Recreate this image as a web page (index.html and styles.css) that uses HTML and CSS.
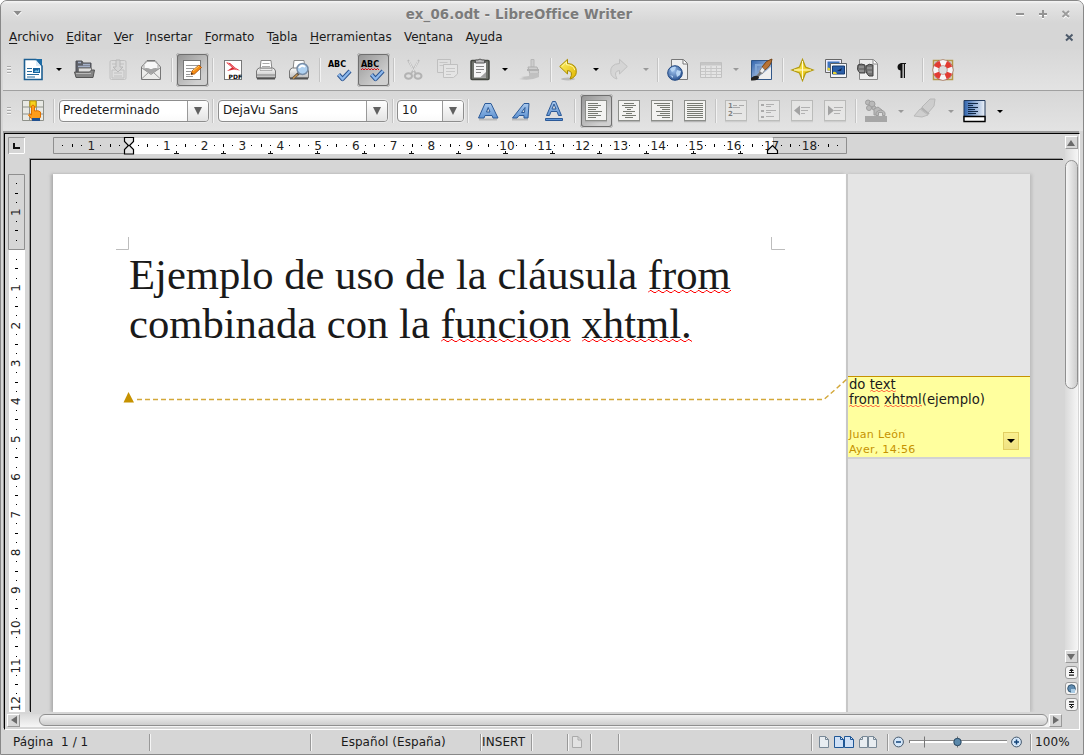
FILE: index.html
```html
<!DOCTYPE html>
<html lang="es">
<head>
<meta charset="utf-8">
<title>ex_06.odt - LibreOffice Writer</title>
<link rel="stylesheet" href="styles.css">
</head>
<body>
<svg class="defs" width="0" height="0">
  <defs>
    <linearGradient id="blue" x1="0" y1="0" x2="1" y2="1"><stop offset="0" stop-color="#2f63ad"/><stop offset="1" stop-color="#dfe9f7"/></linearGradient>
    <linearGradient id="shade" x1="0" y1="0" x2="1" y2="0"><stop offset="0" stop-color="#2f63ad"/><stop offset="1" stop-color="#eef3fa"/></linearGradient>
    <linearGradient id="letter" x1="0" y1="0" x2="0" y2="1"><stop offset="0" stop-color="#a9c8ec"/><stop offset="1" stop-color="#5f93d2"/></linearGradient>
    <linearGradient id="silver" x1="0" y1="0" x2="0" y2="1"><stop offset="0" stop-color="#fafafa"/><stop offset="1" stop-color="#bdbdbd"/></linearGradient>
    <radialGradient id="globe" cx=".4" cy=".35" r=".7"><stop offset="0" stop-color="#9cc0ec"/><stop offset="1" stop-color="#274f8e"/></radialGradient>
    <linearGradient id="gold" x1="0" y1="0" x2="1" y2="1"><stop offset="0" stop-color="#fff56a"/><stop offset="1" stop-color="#e0b400"/></linearGradient>
    <g id="tick"><path d="M10.500 16.500l4 4.500 7.500-8" fill="none" stroke="#2c5590" stroke-width="4.200" stroke-linejoin="round"/><path d="M10.500 16.500l4 4.500 7.500-8" fill="none" stroke="#8db8ec" stroke-width="2.200"/></g>
    <g id="sheet"><rect x="1.500" y="1.500" width="21" height="20" fill="#f3f3f1" stroke="#8c8e8a"/><path d="M1 22.700h22" stroke="#aaa"/></g>
  </defs>
</svg>
<div class="window">
  <header class="titlebar">
    <svg class="win-menu" width="9" height="6" viewBox="0 0 9 6"><path d="M0 1h9L4.500 5.500z" fill="#fff"/><path d="M.500 0h8L4.500 4.500z" fill="#8b8b8b"/></svg>
    <h1 class="title">ex_06.odt - LibreOffice Writer</h1>
    <svg class="win-controls" width="58" height="10" viewBox="0 0 58 10"><g fill="none" stroke-width="2"><path d="M0 6h8M23 6h8M27 2v8M47 3l6 6M53 3l-6 6" stroke="#fff"/><path d="M0 5h8M23 5h8M27 1v8" stroke="#939393"/><path d="M46.500 2l6.500 6M53 2l-6.500 6" stroke="#9c9c9c"/></g></svg>
  </header>
  <nav class="menubar">
    <span><u>A</u>rchivo</span><span><u>E</u>ditar</span><span><u>V</u>er</span><span><u>I</u>nsertar</span><span><u>F</u>ormato</span><span>T<u>a</u>bla</span><span><u>H</u>erramientas</span><span>Ve<u>n</u>tana</span><span>Ay<u>u</u>da</span>
    <svg class="doc-close" width="9" height="9" viewBox="0 0 9 9"><path d="M1 1.500l6.500 6M7.500 1.500L1 7.500" stroke="#4e5b6b" stroke-width="2"/></svg>
  </nav>

  <div class="toolbar standard">
    <i class="grip"></i>
    <span class="tool"><svg viewBox="0 0 24 24"><path d="M3.500 1.500H15l6 6.500v13.500H3.500z" fill="#fff" stroke="#1d5f92" stroke-width="1.600"/><path d="M14 1h7v7z" fill="#1d6ba5"/><path d="M15 2v6h5z" fill="#dcecf8"/><path d="M6 10.500h5M6 13.500h5M6 16.500h12M6 19h8" stroke="#276a9b"/><path d="M12 10h7v5h-7z" fill="#18629b"/><path d="M13 14l2-2 1.500 1 1.500-2v3z" fill="#7ec3e8"/></svg></span>
    <i class="drop w18"></i>
    <span class="tool w34"><svg viewBox="0 0 24 24"><path d="M4 17V3h6l1 2h8v12z" fill="#5e6168" stroke="#4c4f55"/><path d="M6 4.500h3M11 6.500h7M6 8.500h12" stroke="#a4b0c8" stroke-width="1.500"/><path d="M6.500 10h13v5h-13z" fill="#ddd" stroke="#777"/><path d="M2.500 14h15l2-2h3l-1.500 7.500h-17z" fill="#858585" stroke="#555"/><path d="M4 15.500h15" stroke="#b8b8b8"/></svg></span>
    <span class="tool dim"><svg viewBox="0 0 24 24"><rect x="4" y="2.500" width="16" height="19" rx="1.500" fill="#ddd" stroke="#999"/><path d="M6 12h12v8H6zM8 15h8M8 18h8M6 6h12" fill="#ddd" stroke="#999"/><path d="M10 2h4v7h3l-5 5-5-5h3z" fill="#ccc" stroke="#888"/></svg></span>
    <span class="tool"><svg viewBox="0 0 24 24"><path d="M2.500 9L8 2.500h8L21.500 9v12.500h-19z" fill="#ededeb" stroke="#777"/><path d="M5 6.500l3-3h8l3 3v5H5z" fill="#f8f8f8" stroke="#aaa"/><path d="M4 11q4-2 8 .5 4-2.500 8-.5l-8 5z" fill="#a5a5a5"/><path d="M3 20.500l6.500-6M21 20.500l-6.500-6M3 10l9 6.500 9-6.500" fill="none" stroke="#999"/></svg></span>
    <i class="sep"></i>
    <span class="tool on"><svg viewBox="0 0 24 24"><rect x="3.500" y="2.500" width="17" height="19" fill="#fff" stroke="#777"/><path d="M6 7.500h12M6 10.500h8M6 13.500h5M6 16.500h4M6 18.500h7" stroke="#999"/><path d="M11 16.500l1-3.500 7-6 2.500 2.500-7 6.500z" fill="#f58b13" stroke="#a44a08" stroke-width=".8"/><path d="M13 13l6-5" stroke="#ffcf63"/><path d="M11 16.500l.5-2 1.500 1.500z" fill="#222"/></svg></span>
    <i class="sep"></i>
    <span class="tool"><svg viewBox="0 0 24 24"><rect x="3.500" y="2.500" width="17" height="19" fill="#fff" stroke="#777"/><path d="M5 4.500L9 5l5 4.500 5 3-6-1L6 13l5-3.500z" fill="#d92b35"/><path d="M6 4.500L16 12" stroke="#f78287"/><rect x="6" y="14" width="14" height="7" fill="#fff"/><text x="7.500" y="20.500" class="pdf">PDF</text></svg></span>
    <span class="tool"><svg viewBox="0 0 24 24"><path d="M6 12L7 2.500h10L18 12z" fill="#fff" stroke="#888"/><path d="M8.500 5.500h7M8 8.500h8" stroke="#aaa"/><path d="M2.500 13q1-3 3-3h13q2 0 3 3v7h-19z" fill="url(#silver)" stroke="#777"/><path d="M6 10.500h12v2H6z" fill="#eee" stroke="#888" stroke-width=".6"/><path d="M3 16h18v2H3z" fill="#aaa"/><path d="M3 20.500h18" stroke="#505050" stroke-width="2"/></svg></span>
    <span class="tool"><svg viewBox="0 0 24 24"><path d="M6 12L7 2.500h10L18 12z" fill="#fff" stroke="#888"/><path d="M2.500 13q1-3 3-3h13q2 0 3 3v7h-19z" fill="url(#silver)" stroke="#777"/><path d="M3 20.500h18" stroke="#505050" stroke-width="2"/><path d="M12 15l-6 5.500" stroke="#5a5147" stroke-width="3"/><path d="M10.500 16.500L6 20.500" stroke="#c8944f" stroke-width="1.500"/><circle cx="15.500" cy="11" r="5.500" fill="#aed0f0" stroke="#788da6" stroke-width="1.500"/><path d="M12 10q3-4 6-1" stroke="#fff" stroke-width="2" fill="none"/></svg></span>
    <i class="sep"></i>
    <span class="tool"><svg viewBox="0 0 24 24"><text x="0" y="9" class="abc" textLength="18">ABC</text><use href="#tick"/></svg></span>
    <span class="tool on"><svg viewBox="0 0 24 24"><text x="0" y="9" class="abc" textLength="18">ABC</text><path d="M0 12l1.500-1.500L3 12l1.500-1.500L6 12l1.500-1.500L9 12l1.500-1.500L12 12l1.500-1.500L15 12l1.500-1.500L18 12" fill="none" stroke="#e01010"/><use href="#tick"/></svg></span>
    <i class="sep"></i>
    <span class="tool dim"><svg viewBox="0 0 24 24"><path d="M6 2l8 14M17 2L9 16" stroke="#888" stroke-width="1.800"/><path d="M7 3l4.500 10M16 3l-4.500 10" stroke="#eee"/><ellipse cx="6.500" cy="18" rx="3.500" ry="2.800" fill="none" stroke="#777" stroke-width="2"/><ellipse cx="16" cy="18" rx="3.500" ry="2.800" fill="none" stroke="#777" stroke-width="2"/></svg></span>
    <span class="tool dim"><svg viewBox="0 0 24 24"><path d="M2.500 1.500h13v13h-13z" fill="#e5e5e5" stroke="#999"/><path d="M4.500 4.500h8M4.500 7.500h8" stroke="#aaa"/><path d="M8.500 6.500h14V16l-4 3.500h-10z" fill="#eee" stroke="#999"/><path d="M11 10.500h9M11 13.500h9M11 16.500h5" stroke="#aaa"/></svg></span>
    <span class="tool"><svg viewBox="0 0 24 24"><rect x="3" y="2.500" width="18" height="19" rx="1" fill="#70736d" stroke="#42453f" stroke-width="1.500"/><path d="M6 5h12v14.500H6z" fill="#f6f6f6"/><path d="M7.500 2h2.500q2-2 4 0h2.500v3h-9z" fill="#bbb" stroke="#555"/><path d="M8 8.500h8M8 11.500h8M8 14.500h5" stroke="#888"/><path d="M18 14v5.500h-6z" fill="#a0a0a0"/></svg></span>
    <i class="drop w16"></i>
    <span class="tool w34 dim"><svg viewBox="0 0 24 24"><path d="M14 1.500h3V9h-3z" fill="#bbb" stroke="#888"/><path d="M11 9h9q2 4 1.500 9l-8 .5z" fill="#bbb" stroke="#777"/><path d="M10 12h12" stroke="#777" stroke-width="2"/><path d="M12 15h10v4q-8 4-20 2l5-1-3-1 8-1z" fill="#999"/></svg></span>
    <i class="sep"></i>
    <span class="tool"><svg viewBox="0 0 24 24"><ellipse cx="9" cy="21" rx="7" ry="1.500" fill="#bbb"/><path d="M.7 8.500L8.500 1.300v4.200q9.500.5 8.800 9-.5 4.800-6.300 6.500 4-8-2.500-8.500v3.500z" fill="url(#gold)" stroke="#a88b00"/><path d="M2.700 8.500L7.500 4v2.700q7 .3 8.300 5.500" fill="none" stroke="#fff7a5"/></svg></span>
    <i class="drop w15"></i>
    <span class="tool w34 dim"><svg viewBox="0 0 24 24"><path d="M20.300 8.500L12.500 1.300v4.200q-9.500.5-8.800 9 .5 4.800 6.300 6.500-4-8 2.500-8.500v3.500z" fill="#ccc" stroke="#999"/></svg></span>
    <i class="drop w17 faint"></i>
    <i class="sep"></i>
    <span class="tool"><svg viewBox="0 0 24 24"><path d="M5.500 1.500h12l4 4V21.500h-16z" fill="#eee" stroke="#777"/><path d="M17 2v4h4" fill="#fff" stroke="#777"/><circle cx="9" cy="15" r="7.300" fill="url(#globe)" stroke="#234a84"/><path d="M4 11q3-3 6-2l-1 3-3 2zM11 12l4 1-1 4-3 2-1-4zM4 17l3 1v2z" fill="#b6d4f4"/></svg></span>
    <span class="tool dim"><svg viewBox="0 0 24 24"><path d="M1.500 4.500h21v15h-21z" fill="#eee" stroke="#999"/><path d="M2 6h20" stroke="#aaa" stroke-width="3"/><path d="M2 10.500h20M2 13.500h20M2 16.500h20M6.500 8v11M12 8v11M17.500 8v11" stroke="#aaa"/></svg></span>
    <i class="drop w16 faint"></i>
    <span class="tool w35"><svg viewBox="0 0 24 24"><path d="M3.500 2.500h20v19h-20z" fill="url(#blue)" stroke="#315789"/><path d="M8 16V7h10" fill="none" stroke="#7fa5d6" stroke-width="2"/><path d="M8 21h15V9z" fill="#eee"/><path d="M24 1q-6 1-10 8l3 3q6-4 7-11z" fill="#b87336" stroke="#744519"/><path d="M14 9l3 3-3 4-3-2z" fill="#eee" stroke="#888"/><path d="M13 14l-4 5" stroke="#777" stroke-width="2.500"/><path d="M3 20q5-4 8-1 0 4-8 3.500z" fill="#222"/></svg></span>
    <i class="sep"></i>
    <span class="tool"><svg viewBox="0 0 24 24"><path d="M11.500 1.500l3 7.500 7.500 3-7.500 3-3 7.500-3-7.500-7.500-3 7.500-3z" fill="url(#gold)" stroke="#b39b12" stroke-width="1.300"/><path d="M11.500 3v18M3 12h17" stroke="#fffbd0" fill="none"/></svg></span>
    <span class="tool"><svg viewBox="0 0 24 24"><path d="M1.500 1.500h16v13h-16z" fill="#eef" stroke="#666"/><path d="M3.500 3.500h12v9h-12z" fill="#3c73bd"/><path d="M3.500 12.500v-3q3 0 4 3z" fill="#e7d331"/><path d="M6.500 5.500h16v14h-16z" fill="#f5f7fa" stroke="#5c6268"/><path d="M8.500 8h12v8h-12z" fill="#2b5fa9" stroke="#153a70"/><path d="M9 16v-2q3-1 4 2z" fill="#e7d331"/><path d="M13 13l5-3-1 3z" fill="#10284e"/></svg></span>
    <span class="tool"><svg viewBox="0 0 24 24"><path d="M2.500 1.500h14l4 4v16h-18z" fill="#eee" stroke="#888"/><path d="M16 2v4h4" fill="#fff" stroke="#888"/><path d="M1 7q3-2 7 0v8H3q-4-3-2-8zM9 8q3-3 7-1v11h-4q-4-3-3-10z" fill="#747474" stroke="#3f3f3f"/><path d="M2 9h5M10 10h5M2 13h5M11 14h4" stroke="#aaa"/></svg></span>
    <span class="tool"><svg viewBox="0 0 24 24"><path d="M10.500 12.500Q7.500 12 7.500 9t3.500-4h5v1h-1v14h-1.200V6h-1.300v14h-2z" fill="#111"/></svg></span>
    <i class="sep"></i>
    <span class="tool"><svg viewBox="0 0 24 24"><path d="M2.500 2.500h19v19h-19z" fill="none" stroke="#b59847" stroke-width="1.500"/><circle cx="12" cy="12" r="7.200" fill="none" stroke="#9a5a50" stroke-width="6.600"/><circle cx="12" cy="12" r="7.200" fill="none" stroke="#f6f6f6" stroke-width="5.400"/><circle cx="12" cy="12" r="7.200" fill="none" stroke="#e23b32" stroke-width="5.400" stroke-dasharray="5.650 5.660" stroke-dashoffset="-2.800"/></svg></span>
  </div>

  <div class="toolbar formatting">
    <i class="grip"></i>
    <span class="tool"><svg viewBox="0 0 24 24"><path d="M1.500 1.500h21v20h-21z" fill="#e8e9e4" stroke="#8e918a"/><path d="M8.500 1.500v20M15.500 1.500v20M1.500 8h21M1.500 15h21" stroke="#8e918a"/><path d="M9 2h6v6H9z" fill="#f6d21f" stroke="#c7a000"/><path d="M10.500 16V7q1.500-2 3 0v5q4-1 6 1v5l-2 3h-6l-4-5q1-2 3 0z" fill="#ff9d1c" stroke="#e07000"/><path d="M11 19h8v3h-8z" fill="#21508f"/></svg></span>
    <i class="sep"></i>
    <div class="combo c-style"><span>Predeterminado</span><b></b></div>
    <i class="sep w9"></i>
    <div class="combo c-font"><span>DejaVu Sans</span><b></b></div>
    <i class="sep"></i>
    <div class="combo c-size"><span>10</span><b></b></div>
    <i class="sep"></i>
    <span class="tool"><svg viewBox="0 0 24 24"><path d="M3 20.500h18" stroke="#bbb" stroke-width="2"/><path fill-rule="evenodd" d="M2.500 19L9 4.500h6L22 19h-5l-1-2.500H9L8 19zM10.500 13h3.500l-1.800-4.500z" fill="url(#letter)" stroke="#2c5a98" stroke-linejoin="round"/></svg></span>
    <span class="tool"><svg viewBox="0 0 24 24"><path d="M3 20.500h16" stroke="#bbb" stroke-width="2"/><path fill-rule="evenodd" d="M3.500 19L15 4.500h5L19 19h-4v-2.500h-5L8 19zM12.500 13.500h3l.5-5z" fill="url(#letter)" stroke="#2c5a98" stroke-linejoin="round"/></svg></span>
    <span class="tool"><svg viewBox="0 0 24 24"><path fill-rule="evenodd" d="M4.500 16.500l6-14h3l6 14h-3l-1.500-4H9l-1.500 4zM10 10h4l-2-5z" fill="url(#letter)" stroke="#2c5a98" stroke-linejoin="round"/><path d="M3.500 19.500h17v2h-17z" fill="#5c95d8" stroke="#2c5a98"/></svg></span>
    <i class="sep w9"></i>
    <span class="tool on"><svg viewBox="0 0 24 24"><use href="#sheet"/><path d="M4 4.500h10M4 6.500h13M4 8.500h10M4 10.500h8M4 12.500h14M4 14.500h10M4 16.500h13M4 18.500h8" stroke="#777a72"/></svg></span>
    <span class="tool"><svg viewBox="0 0 24 24"><use href="#sheet"/><path d="M7 4.500h10M5 6.500h14M8 8.500h8M10 10.500h4M6 12.500h12M9 14.500h6M5 16.500h14M8 18.500h8" stroke="#777a72"/></svg></span>
    <span class="tool"><svg viewBox="0 0 24 24"><use href="#sheet"/><path d="M4 4.500h16M7 6.500h13M10 8.500h10M12 10.500h8M6 12.500h14M10 14.500h10M7 16.500h13M12 18.500h8" stroke="#777a72"/></svg></span>
    <span class="tool"><svg viewBox="0 0 24 24"><use href="#sheet"/><path d="M4 4.500h16M4 6.500h16M4 8.500h16M4 10.500h16M4 12.500h16M4 14.500h16M4 16.500h16M4 18.500h16" stroke="#777a72"/></svg></span>
    <i class="sep"></i>
    <span class="tool dim"><svg viewBox="0 0 24 24"><use href="#sheet"/><text x="4" y="9" class="num">1</text><text x="4" y="17" class="num">2</text><path d="M9 6.500h4M15 6.500h5M9 8.500h7M9 14.500h9" stroke="#666"/></svg></span>
    <span class="tool dim"><svg viewBox="0 0 24 24"><use href="#sheet"/><path d="M4 5h3v2H4zM4 11h3v2H4zM4 17h3v2H4z" fill="#666"/><path d="M9 5.500h8M9 7.500h5M9 11.500h10M9 13.500h5M9 17.500h8" stroke="#777"/></svg></span>
    <span class="tool dim"><svg viewBox="0 0 24 24"><use href="#sheet"/><path d="M10 6.500v10L4 11.500z" fill="#555"/><path d="M11 8.500h9M11 11.500h7M11 14.500h4" stroke="#777"/></svg></span>
    <span class="tool dim"><svg viewBox="0 0 24 24"><use href="#sheet"/><path d="M5 6.500v10l6-5z" fill="#555"/><path d="M11 8.500h9M11 11.500h7M11 14.500h6" stroke="#777"/></svg></span>
    <i class="sep"></i>
    <span class="tool"><svg viewBox="-1 0 24 24"><path d="M0 17h22v6H0z" fill="#a6a6a6"/><g fill="#b9b9b9" stroke="#9e9e9e"><circle cx="3" cy="3.500" r="2.500"/><circle cx="7" cy="5" r="3"/><circle cx="4" cy="9" r="2.500"/><circle cx="9" cy="9" r="2"/><path d="M9 10l4-2 4 3-5 5H9z"/><path d="M11 16.500v-3q5-5 9 0v3h-2.500v-3h-4v3z"/></g></svg></span>
    <i class="drop w15 faint"></i>
    <span class="tool w35 dim"><svg viewBox="-2 0 24 24"><path d="M0 17l6-7 8 6-6 2zM8 8l8-8h5l-1 7-6 7z" fill="#bbb" stroke="#888"/><path d="M7 9l8 6" stroke="#777" stroke-width="2"/></svg></span>
    <i class="drop w15 faint"></i>
    <span class="tool"><svg viewBox="0 0 24 24"><path d="M2 1.500h21v20H2z" fill="url(#shade)" stroke="#223a5c"/><path d="M6 4.500h10M6 6.500h5M6 8.500h10M6 10.500h7M6 12.500h10M6 14.500h8" stroke="#112846"/><path d="M2 17.500h21v5H2z" fill="#fff" stroke="#000" stroke-width="1.400"/></svg></span>
    <i class="drop w18"></i>
  </div>

  <main class="frame">
    <div class="corner"><svg width="17" height="17" viewBox="0 0 17 17"><path d="M.5.500h16v16H.500z" fill="#d6d6d6" stroke="#999"/><path d="M16.500 1v15.500H1" fill="none" stroke="#fff"/><path d="M6 6v5h6" fill="none" stroke="#111" stroke-width="2"/></svg></div>
    <svg id="hruler" class="hruler" viewBox="30 134 1033 24">
      <path d="M53.500 137.500h74v16h-74zM773 137.500h73.500v16H773z" fill="#d6d6d6" stroke="#8f8f8f"/>
      <path d="M128 138h645v16H128z" fill="#fff"/>
    </svg>
    <svg id="vruler" class="vruler" viewBox="5 158 25 554">
      <path d="M8.500 174.500h16v75h-16z" fill="#d6d6d6" stroke="#8f8f8f"/>
      <path d="M9 250h16v462H9z" fill="#fff"/>
    </svg>
    <section class="view">
      <article class="page">
        <p>Ejemplo de uso de la cláusula <span class="err">from</span><br>combinada con la <span class="err">funcion</span> <span class="err">xhtml.</span></p>
      </article>
      <aside class="margin">
        <div class="note">
          <p class="note-text">do <span class="err small">text</span><br><span class="err small">from</span> <span class="err small">xhtml</span>(ejemplo)</p>
          <footer><span>Juan León<br>Ayer, 14:56</span><i class="note-btn"></i></footer>
        </div>
      </aside>
      <svg class="marks" viewBox="31 160 1032 552">
        <path d="M116 249.500h12.500V237M785 249.500h-13.500V237" fill="none" stroke="#bdbdbd"/>
        <path d="M128.500 392l-5 10.500h10.500z" fill="#c69200"/>
        <path d="M137 399.500h687L847 379" fill="none" stroke="#d3a83a" stroke-width="1.400" stroke-dasharray="5 3"/>
      </svg>
    </section>
    <div class="vscroll">
      <i class="sb up"></i><div class="vtrack"><div class="vthumb"></div></div><i class="sb down"></i>
      <span class="nav"><svg viewBox="0 0 9 9"><path d="M4.500.500L7 3H2zM4 2h1v3H4zM2 4h5v1H2zM2 6.500h5v1.200H2z" fill="#111"/></svg></span>
      <span class="nav"><svg viewBox="0 0 9 9"><circle cx="4.500" cy="4.500" r="3.800" fill="#5f8bb0" stroke="#33546f"/><path d="M4 5h4v4H4z" fill="#a9cbe4"/></svg></span>
      <span class="nav"><svg viewBox="0 0 9 9"><path d="M4.500 8.500L7 6H2zM4 4h1v3H4zM2 1.300h5v1.200H2zM2 4h5v1H2z" fill="#111"/></svg></span>
    </div>
    <div class="hscroll"><i class="sb left"></i><div class="htrack"><div class="hthumb"></div></div><i class="sb right"></i></div>
  </main>

  <footer class="status">
    <span class="cell s1">Página&nbsp; 1 / 1</span><span class="cell s2"></span><span class="cell s3">Español (España)</span><span class="cell s4">INSERT</span><span class="cell s5"></span>
    <span class="cell s6"><svg width="10" height="12" viewBox="0 0 10 12"><path d="M.5.500H6l3.500 3.500v7.500H.500z" fill="#e2e2e2" stroke="#aaa"/><path d="M6 .5V4h3.500" fill="none" stroke="#aaa"/></svg></span>
    <span class="cell s7"></span><span class="cell s8"></span>
    <span class="cell s9"><svg width="58" height="12" viewBox="0 0 58 12"><g stroke-width="1"><path d="M.5.500h6l3 3v8h-9z" fill="#e8edf1" stroke="#788896"/><path d="M6.500.5v3h3" fill="none" stroke="#788896"/><path d="M15.500.500h6l3 3v8h-9zM25.500.500h6l3 3v8h-9z" fill="#cfe0f6" stroke="#1f5796"/><path d="M21.500.5v3h3M31.500.5v3h3" fill="none" stroke="#1f5796"/><path d="M43.500.500h5v11h-8v-8zM49.500.500h5l3 3v8h-8z" fill="#e8edf1" stroke="#788896"/><path d="M43.500.5v3h-3M54.500.5v3h3" fill="none" stroke="#788896"/></g></svg></span>
    <span class="cell s10"><svg width="132" height="14" viewBox="0 0 132 14"><path d="M18 5.500h97" stroke="#888"/><path d="M18 7h97" stroke="#fff" stroke-width="2"/><path d="M17.500 5v3M32.500 1.500v11M65.500 1.500v11" stroke="#777"/><circle cx="65.500" cy="7" r="3.700" fill="#5b89ab" stroke="#27455f"/><circle cx="6.500" cy="7" r="4.900" fill="#d4e7fa" stroke="#45586c"/><path d="M4 7h5" stroke="#124378" stroke-width="1.500"/><circle cx="124.500" cy="7" r="4.900" fill="#d4e7fa" stroke="#45586c"/><path d="M122 7h5M124.500 4.500v5" stroke="#124378" stroke-width="1.500"/></svg></span>
    <span class="cell s11">100%</span>
  </footer>
</div>
<script src="rulers.js"></script>
</body>
</html>
```
FILE: styles.css
```css
* { box-sizing: border-box; }
body { margin: 0; background: #fff; font-family: "DejaVu Sans", sans-serif; font-size: 12px; color: #1a1a1a; overflow: hidden; }
.defs { position: absolute; }
.window { width: 1084px; height: 755px; display: flex; flex-direction: column; background: #d6d6d6; border: 1px solid #888; border-radius: 7px 7px 0 0; overflow: hidden; }

.titlebar { height: 26px; flex: none; display: flex; align-items: center; background: linear-gradient(#f6f6f6, #e4e4e4 3px, #d6d6d6 22px); }
.win-menu { margin-left: 12px; }
.title { margin: 0; flex: 1; text-align: center; font-size: 13.33px; letter-spacing: .13px; font-weight: bold; color: #7b7b7b; text-shadow: 0 1px #ececec; }
.win-controls { margin-right: 9px; }

.menubar { height: 22px; flex: none; display: flex; align-items: center; gap: 12.25px; padding: 0 0 2px 8px; }
.menubar u { text-underline-offset: 2px; }
.doc-close { margin-left: auto; margin-right: 9px; }

.toolbar { flex: none; display: flex; align-items: center; background: linear-gradient(#d7d7d7, #e3e3e3); margin-left: 2px; padding-right: 2px; }
.standard { height: 42px; border-bottom: 1px solid #a0a0a0; }
.formatting { height: 40px; }
.grip { width: 14px; height: 8px; flex: none; background: repeating-linear-gradient(#aaa 0 1px, #f2f2f2 1px 2px, transparent 2px 3px) 4px 0 / 4px 8px no-repeat; }
.tool { width: 33px; height: 34px; flex: none; padding: 5px 4px; border-radius: 4px; }
.tool svg { display: block; width: 24px; height: 24px; overflow: visible; }
.tool.on { box-shadow: inset 0 0 0 1px #d0d0d0, inset 0 0 0 2px #6f6f6f; background: linear-gradient(135deg, #929292, #d0d0d0 75%); }
.dim svg { opacity: .42; }
.w34 { width: 34px; }
.w35 { width: 35px; }
.sep { width: 8px; height: 24px; flex: none; background: linear-gradient(90deg, #c4c4c4 50%, #f2f2f2 50%) 3px 0 / 2px 24px no-repeat; }
.sep.w9 { width: 9px; }
.drop { flex: none; display: flex; justify-content: center; }
.drop::after { content: ""; border: 3px solid transparent; border-top-color: #000; border-bottom: 0; }
.drop.faint::after { border-top-color: #999; }
.w15 { width: 15px; }
.w16 { width: 16px; }
.w17 { width: 17px; }
.w18 { width: 18px; }
.pdf { font: bold 6px "DejaVu Sans", sans-serif; }
.abc { font: bold 8px "DejaVu Sans", sans-serif; }
.num { font: bold 7px "DejaVu Sans", sans-serif; }

.combo { height: 22px; flex: none; display: flex; background: linear-gradient(#fff 60%, #fafafa); border: 1px solid #8d8d8d; border-radius: 4px; box-shadow: 0 0 0 1px #ececec; }
.combo span { flex: 1; padding-left: 4px; line-height: 19px; white-space: nowrap; }
.combo b { width: 21px; border-left: 1px solid #999; border-radius: 0 3px 3px 0; background: linear-gradient(#fff, #e3e3e3); display: flex; align-items: center; justify-content: center; }
.combo b::after { content: ""; border: 4px solid transparent; border-top: 8px solid #606060; border-bottom: 0; }
.c-style { width: 150px; margin-left: 1px; }
.c-style span { padding-left: 3px; letter-spacing: .05px; }
.c-font { width: 170px; margin-right: 1px; }
.c-size { width: 67px; }

.frame { height: 597px; flex: none; margin: 2px 3px 0 3px; border-top: 1px solid #000; border-left: 1px solid #000; border-bottom: 1px solid #fff; border-right: 1px solid #fff; display: grid; grid-template: 24px 554px 16px / 25px 1033px 16px; box-shadow: -1px -2px #999; }
.corner { padding: 3px 0 0 3px; }
.hruler { grid-column: 2; width: 1033px; height: 24px; }
.vruler { grid-row: 2; width: 25px; height: 554px; }
.ruler-label { font: 12px "DejaVu Sans", sans-serif; fill: #222; text-anchor: middle; }
.view { grid-area: 2 / 2; position: relative; display: flex; margin-top: 1px; padding: 14px 0 0 22px; border-left: 1px solid #111; border-top: 1px solid #111; background: #d6d6d6; box-shadow: -1px -1px #999; overflow: hidden; }
.page { width: 793px; background: #fff; padding: 76px 0 0 76px; box-shadow: -2px 0 3px #aaa; }
.page p { margin: 0; font: 42.67px/49px "Liberation Serif", serif; white-space: nowrap; }
.err { background: url("data:image/svg+xml,%3Csvg xmlns='http://www.w3.org/2000/svg' width='8' height='3'%3E%3Cpath d='M0 2.500l2-2h1l3 2h2' fill='none' stroke='red'/%3E%3C/svg%3E") 0 39px / 8px 3px repeat-x; }
.err.small { background-size: 5px 2px; background-position: 0 100%; }
.margin { width: 184px; background: #e5e5e5; border-left: 2px solid #c7c7c7; padding-top: 202px; box-shadow: 2px 0 3px #bcbcbc; }
.note { height: 83px; background: #ffff9e; border-top: 1px solid #c69200; border-bottom: 2px solid #d2d2d2; }
.note p { margin: 0; padding-left: 1px; font-size: 13.200px; line-height: 15px; height: 50px; }
.note footer { display: flex; justify-content: space-between; padding-left: 1px; font-size: 11px; line-height: 15px; color: #c69200; letter-spacing: .3px; }
.note-btn { width: 16px; height: 18px; margin: 5px 11px 0 0; border: 1px solid #e2cf62; background: linear-gradient(#faf08e, #efe283); display: flex; align-items: center; justify-content: center; }
.note-btn::after { content: ""; border: 4px solid transparent; border-top-color: #000; border-bottom: 0; }
.marks { position: absolute; left: 0; top: 0; width: 1032px; height: 552px; }

.vscroll { grid-area: 1 / 3 / 3 / 4; display: flex; flex-direction: column; align-items: center; padding-top: 2px; }
.sb { width: 13px; height: 13px; flex: none; border: 1px solid; border-color: #fff #999 #999 #fff; background: #d6d6d6; display: flex; align-items: center; justify-content: center; }
.sb::after { content: ""; border: 4px solid transparent; }
.sb.up::after { border-top: 0; border-bottom: 6px solid #6b6b6b; }
.sb.down::after { border-bottom: 0; border-top: 6px solid #6b6b6b; }
.sb.left::after { border-left: 0; border-right: 6px solid #6b6b6b; }
.sb.right::after { border-right: 0; border-left: 6px solid #6b6b6b; }
.vtrack { width: 13px; height: 501px; padding-top: 11px; background: linear-gradient(90deg, #dadada, #f6f6f6); }
.vthumb { height: 229px; border: 1px solid #8f8f8f; border-radius: 7px; background: linear-gradient(90deg, #f6f6f6, #cdcdcd); }
.nav { width: 13px; height: 13px; flex: none; margin-top: 3px; padding: 1px; border: 1px solid #999; border-radius: 3px; background: #f5f5f5; }
.nav svg { display: block; width: 9px; height: 9px; }
.hscroll { grid-area: 3 / 1 / 4 / 4; display: flex; align-items: center; padding-left: 2px; }
.htrack { width: 1029px; height: 13px; padding-left: 19px; background: linear-gradient(#dadada, #f6f6f6); }
.hthumb { width: 1009px; height: 12px; border: 1px solid #8f8f8f; border-radius: 7px; background: linear-gradient(#f2f2f2, #cdcdcd); }

.status { flex: 1; display: flex; align-items: center; }
.cell { flex: none; height: 17px; line-height: 17px; display: flex; align-items: center; border-right: 1px solid #999; box-shadow: 1px 0 #f5f5f5; white-space: nowrap; }
.s1 { width: 149px; padding-left: 12px; letter-spacing: .06px; }
.s2 { width: 161px; }
.s3 { width: 170px; padding-left: 30px; letter-spacing: .05px; }
.s4 { width: 51px; padding-left: 1px; letter-spacing: .1px; }
.s5 { width: 36px; }
.s6 { width: 23px; padding-left: 4px; }
.s7 { width: 28px; }
.s8 { width: 193px; }
.s9 { width: 76px; padding-left: 7px; }
.s10 { width: 143px; padding-left: 4px; }
.s11 { border: 0; box-shadow: none; padding-left: 4px; letter-spacing: .15px; }
```
FILE: rulers.js
```js
// Centimetre rulers: quarter dots, half ticks and numeric labels.
const NS = "http://www.w3.org/2000/svg";
const CM = 37.8;

function add(parent, name, attrs, text) {
  const el = document.createElementNS(NS, name);
  for (const key in attrs) el.setAttribute(key, attrs[key]);
  if (text !== undefined) el.textContent = text;
  parent.appendChild(el);
}

function rule(svg, zero, fromQuarter, toQuarter, vertical) {
  for (let q = fromQuarter; q <= toQuarter; q++) {
    if (q === 0) continue;
    const pos = zero + q * CM / 4;
    const p = Math.round(pos - 0.5);
    const part = Math.abs(q % 4);
    if (part === 0) {
      const label = String(Math.abs(q / 4));
      if (vertical) add(svg, "text", { class: "ruler-label", transform: `translate(20 ${pos + 0.3}) rotate(-90)` }, label);
      else add(svg, "text", { class: "ruler-label", x: pos, y: 149.500 }, label);
    } else if (part === 2) {
      add(svg, "rect", vertical ? { x: 15, y: p, width: 3, height: 1 } : { x: p, y: 144, width: 1, height: 3 });
    } else {
      add(svg, "rect", vertical ? { x: 16, y: p, width: 1, height: 1 } : { x: p, y: 145, width: 1, height: 1 });
    }
  }
}

const h = document.getElementById("hruler");
rule(h, 129, -7, 75, false);
for (let x = 176; x < 760; x += 47) {
  add(h, "path", { d: `M${x - 2} 153.500h5M${x + 0.5} 151v2`, stroke: "#111" });
}
add(h, "path", { d: "M124.500 137.500h9v4l-4 4 4 4v4.500h-9v-4.500l4-4-4-4z", fill: "#e6e6e6", stroke: "#000", "stroke-width": 1.200 });
add(h, "path", { d: "M767.500 153.500v-3l5-5 5 5v3z", fill: "#e6e6e6", stroke: "#000", "stroke-width": 1.200 });
rule(document.getElementById("vruler"), 249.800, -7, 48, true);
```
